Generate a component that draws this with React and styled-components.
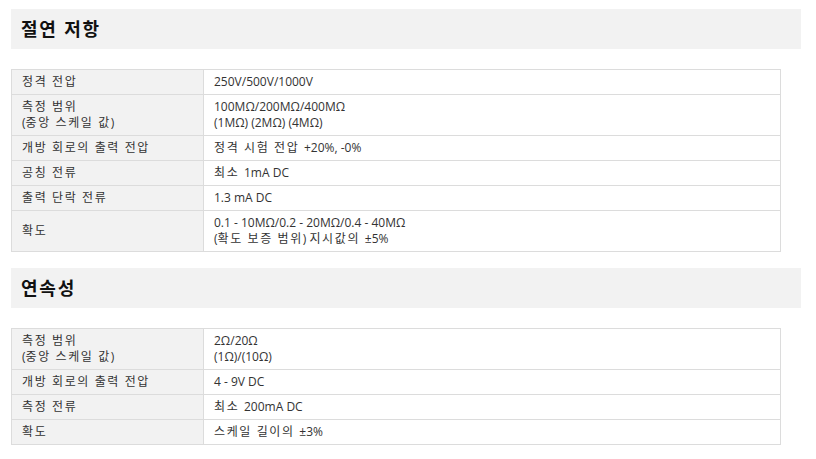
import React from 'react'
import styled, { createGlobalStyle } from 'styled-components'

const GlobalStyle = createGlobalStyle`
  body {
    margin: 0;
    background: #fff;
    font-family: "Open Sans", "Noto Sans CJK KR", sans-serif;
  }
`

const sections = [
  {
    title: '절연 저항',
    rows: [
      [['정격 전압'], ['250V/500V/1000V']],
      [['측정 범위', '(중앙 스케일 값)'], ['100MΩ/200MΩ/400MΩ', '(1MΩ) (2MΩ) (4MΩ)']],
      [['개방 회로의 출력 전압'], ['정격 시험 전압 +20%, -0%']],
      [['공칭 전류'], ['최소 1mA DC']],
      [['출력 단락 전류'], ['1.3 mA DC']],
      [['확도'], ['0.1 - 10MΩ/0.2 - 20MΩ/0.4 - 40MΩ', '(확도 보증 범위) 지시값의 ±5%']],
    ],
  },
  {
    title: '연속성',
    rows: [
      [['측정 범위', '(중앙 스케일 값)'], ['2Ω/20Ω', '(1Ω)/(10Ω)']],
      [['개방 회로의 출력 전압'], ['4 - 9V DC']],
      [['측정 전류'], ['최소 200mA DC']],
      [['확도'], ['스케일 길이의 ±3%']],
    ],
  },
]

// hangul runs are set a little looser than latin text
const HANGUL = /([\uAC00-\uD7AF\u3130-\u318F][\uAC00-\uD7AF\u3130-\u318F ]*)/
const Hangul = styled.span`
  letter-spacing: ${p => p.$spacing || '1.6px'};
`

const KoText = ({ children, spacing }) =>
  children.split(HANGUL).map((part, i) =>
    HANGUL.test(part) ? <Hangul key={i} $spacing={spacing}>{part}</Hangul> : part
  )

const Page = styled.div`
  padding: 9px 0 0 11px;
`

const Section = styled.section`
  margin-bottom: 16px;
`

const Heading = styled.h2`
  margin: 0 0 20px;
  width: 790px;
  height: 40px;
  box-sizing: border-box;
  display: flex;
  align-items: center;
  padding-left: 10px;
  background: #f2f2f2;
  color: #111;
  font-size: 18px;
  font-weight: 700;
  line-height: 1;
`

const Table = styled.table`
  width: 770px;
  border-collapse: collapse;
  font-size: 12px;
  line-height: 16px;
  color: #333;
`

const Cell = styled.td`
  border: 1px solid #dcdcdc;
  padding: 4px 10px;
  vertical-align: middle;
  background: ${p => (p.$label ? '#f2f2f2' : '#fff')};
  width: ${p => (p.$label ? '171px' : 'auto')};
`

const Line = styled.div`
  white-space: nowrap;
`

export default function App() {
  return (
    <>
      <GlobalStyle />
      <Page>
        {sections.map(s => (
          <Section key={s.title}>
            <Heading><KoText spacing="1.8px">{s.title}</KoText></Heading>
            <Table>
              <tbody>
                {s.rows.map(([label, value], i) => (
                  <tr key={i}>
                    <Cell $label>
                      {label.map(t => <Line key={t}><KoText>{t}</KoText></Line>)}
                    </Cell>
                    <Cell>
                      {value.map(t => <Line key={t}><KoText>{t}</KoText></Line>)}
                    </Cell>
                  </tr>
                ))}
              </tbody>
            </Table>
          </Section>
        ))}
      </Page>
    </>
  )
}
